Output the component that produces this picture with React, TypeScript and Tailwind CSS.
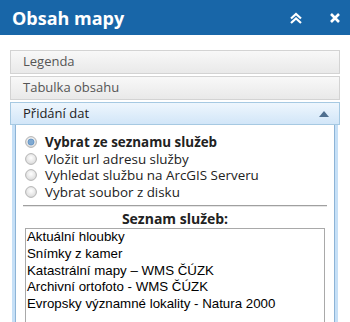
import React from "react";

const services = [
  "Aktuální hloubky",
  "Snímky z kamer",
  "Katastrální mapy – WMS ČÚZK",
  "Archivní ortofoto - WMS ČÚZK",
  "Evropsky významné lokality - Natura 2000",
];

const sources = [
  "Vybrat ze seznamu služeb",
  "Vložit url adresu služby",
  "Vyhledat službu na ArcGIS Serveru",
  "Vybrat soubor z disku",
];

function Radio({ checked }: { checked: boolean }) {
  return (
    <svg width="12" height="12" viewBox="0 0 12 12" className="shrink-0">
      <defs>
        <radialGradient id={checked ? "rg-on" : "rg-off"} cx="50%" cy="40%" r="60%">
          <stop offset="0%" stopColor="#ffffff" />
          <stop offset="100%" stopColor="#d9d9d9" />
        </radialGradient>
      </defs>
      <circle cx="6" cy="6" r="5.4" fill={`url(#${checked ? "rg-on" : "rg-off"})`} stroke="#b4b4b4" strokeWidth="1" />
      {checked && <circle cx="6" cy="6" r="3" fill="#7fa9d1" stroke="#5b8fc4" strokeWidth="0.8" />}
    </svg>
  );
}

export default function App() {
  return (
    <div className="h-[322px] w-[350px] overflow-hidden bg-white font-['Open_Sans',sans-serif]">
      <div className="flex h-[35px] items-center bg-[#1866a8] pl-3 pr-[9px]">
        <h1 className="flex-1 text-[18px] font-bold leading-none text-white">Obsah mapy</h1>
        <svg width="14" height="12" viewBox="0 0 14 12" className="mr-[26px]">
          <path d="M2 6.5 L7 2 L12 6.5 M2 11 L7 6.5 L12 11" fill="none" stroke="white" strokeWidth="2.2" />
        </svg>
        <svg width="12" height="12" viewBox="0 0 12 12">
          <path d="M2 2 L10 10 M10 2 L2 10" fill="none" stroke="white" strokeWidth="2.6" />
        </svg>
      </div>

      <div className="mx-[10px] mt-[15px] flex flex-col">
        <div className="flex h-[24px] items-center border border-[#d3d3d3] bg-gradient-to-b from-[#f8f8f8] to-[#e9e9e9] pl-3 text-[13px] text-[#555555]">
          Legenda
        </div>
        <div className="mt-[2px] flex h-[24px] items-center border border-[#d3d3d3] bg-gradient-to-b from-[#f8f8f8] to-[#e9e9e9] pl-3 text-[13px] text-[#555555]">
          Tabulka obsahu
        </div>
        <div className="mt-[2px] flex h-[23px] items-center border border-[#a6c9e2] bg-gradient-to-b from-[#eef6fd] to-[#d2e6f8] pl-3 pr-[10px] text-[13px] text-[#222222]">
          <span className="flex-1">Přidání dat</span>
          <svg width="10" height="6" viewBox="0 0 10 6">
            <path d="M0 6 L5 0 L10 6 Z" fill="#4f6f8f" />
          </svg>
        </div>
        <div className="mx-[2px] h-[220px] border-x-[3px] border-[#c6e0f7] shadow-[inset_1px_0_0_#8eb4d6,inset_-1px_0_0_#8eb4d6]">
          <div className="flex flex-col px-[10px] pt-[9px]">
            {sources.map((s, i) => (
              <label key={s} className="flex h-[16.5px] items-center gap-[8px] text-[13.4px] text-[#222222]">
                <Radio checked={i === 0} />
                <span className={i === 0 ? "font-bold" : ""}>{s}</span>
              </label>
            ))}
            <div className="-mx-[2px] mt-[5px] h-[2px] border-t border-b border-t-[#a0a0a0] border-b-[#e6e6e6]" />
            <div className="mt-[3px] text-center text-[14px] font-bold leading-[18px] text-[#222222]">Seznam služeb:</div>
            <div className="h-[110px] border border-[#a9a9a9] pl-[1px] font-['Liberation_Sans',Arial,sans-serif] text-[13.3px] leading-[16.75px] text-black">
              {services.map((s) => (
                <div key={s}>{s}</div>
              ))}
            </div>
          </div>
        </div>
      </div>
    </div>
  );
}
